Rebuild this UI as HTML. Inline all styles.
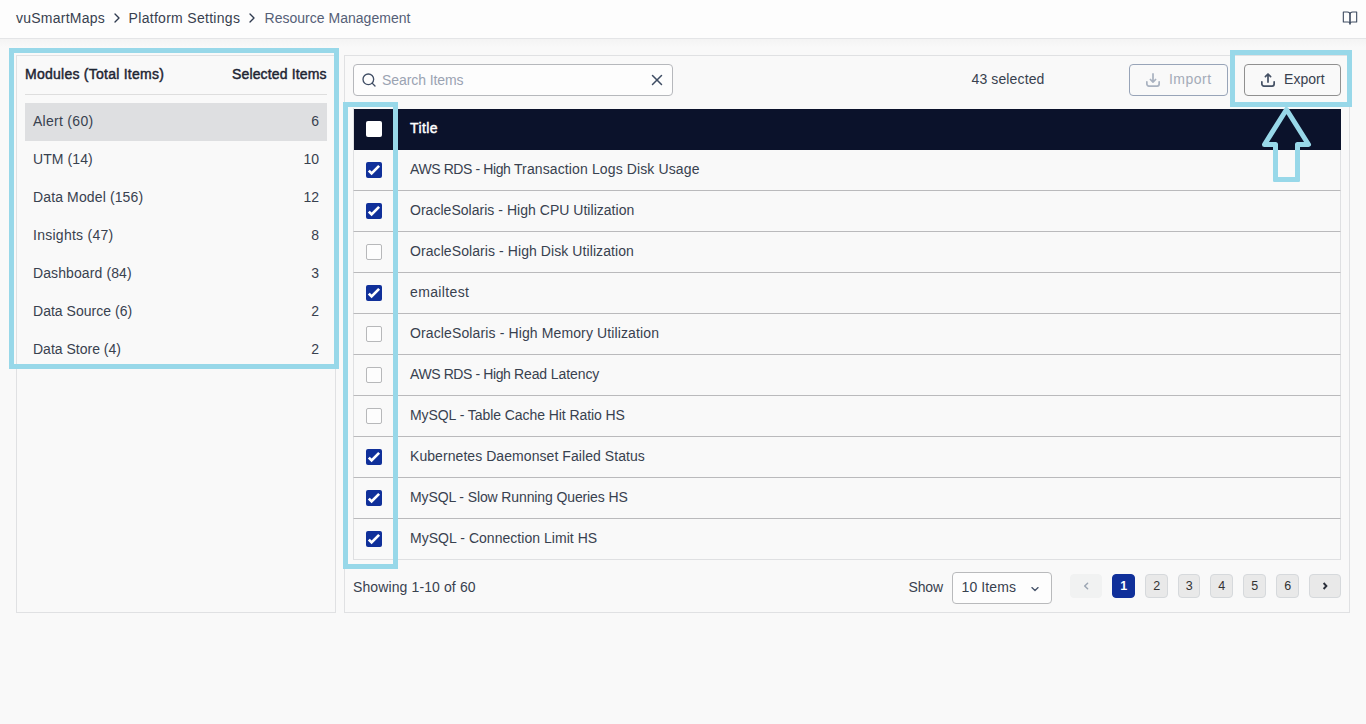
<!DOCTYPE html>
<html lang="en">
<head>
<meta charset="utf-8">
<title>Resource Management</title>
<style>
*{box-sizing:border-box;margin:0;padding:0}
html,body{width:1366px;height:724px;overflow:hidden}
body{background:#f9f9f9;font-family:"Liberation Sans",Arial,sans-serif;font-size:14px;color:#38414f;position:relative}
.abs{position:absolute}
.t{position:absolute;white-space:nowrap;line-height:20px;height:20px}
#topbar{position:absolute;left:0;top:0;width:1366px;height:39px;background:#fdfdfd;border-bottom:1px solid #e4e5e7}
#tshadow{position:absolute;left:0;top:39px;width:1366px;height:9px;background:linear-gradient(#f4f4f4,#f9f9f9)}
.panel{position:absolute;border:1px solid #e0e1e3;background:#f9f9f9}
.hl{position:absolute;border:5px solid #98d8e9;pointer-events:none}
.b{font-weight:normal;-webkit-text-stroke:0.45px currentColor}
.row-sel{position:absolute;left:25px;top:103px;width:302px;height:38px;background:#dedfe1}
.num{position:absolute;white-space:nowrap;line-height:20px;height:20px;text-align:right;width:40px;left:279px}
#search{position:absolute;left:353px;top:64px;width:320px;height:32px;border:1px solid #b6b8bc;border-radius:4px;background:#fdfdfd}
.btn{position:absolute;top:64px;height:32px;border:1px solid #909090;border-radius:4px;background:#f9f9f9}
#thead{position:absolute;left:354px;top:109px;width:987px;height:41px;background:#0b122b}
.tr{position:absolute;left:353px;width:988px;height:41px;border-left:1px solid #dfe0e2;border-right:1px solid #dfe0e2;border-bottom:1px solid #bababc}
.cb{position:absolute;left:366px;width:16px;height:16px;border-radius:2px}
.cb.off{background:#fdfdfd;border:1px solid #b7b8ba}
.cb.on{background:#10309a}
.cb svg{position:absolute;left:0;top:0}
.pg{position:absolute;top:574px;height:24px;width:23px;border:1px solid #d6d9dc;border-radius:4px;background:#e9e9e9;text-align:center;line-height:22px;font-size:12.5px;color:#333;padding-left:0.5px}
</style>
</head>
<body>
<div id="topbar"></div><div id="tshadow"></div>
<span class="t" style="left:16.0px;top:8px;letter-spacing:0.240px">vuSmartMaps</span>
<svg class="abs" style="left:108.5px;top:10px" width="16" height="16" viewBox="0 0 24 24" fill="none" stroke="#2f3b4f" stroke-width="2" stroke-linecap="round" stroke-linejoin="round"><polyline points="9 18 15 12 9 6"/></svg>
<span class="t" style="left:128.6px;top:8px;letter-spacing:0.295px">Platform Settings</span>
<svg class="abs" style="left:243.5px;top:10px" width="16" height="16" viewBox="0 0 24 24" fill="none" stroke="#2f3b4f" stroke-width="2" stroke-linecap="round" stroke-linejoin="round"><polyline points="9 18 15 12 9 6"/></svg>
<span class="t" style="left:264.5px;top:8px;letter-spacing:0.020px;color:#556077">Resource Management</span>

<svg class="abs" style="left:1342px;top:10px" width="16" height="16" viewBox="0 0 24 24" fill="none" stroke="#414e63" stroke-width="1.7" stroke-linecap="round" stroke-linejoin="round"><path d="M2 3h6a4 4 0 0 1 4 4v14a3 3 0 0 0-3-3H2z"/><path d="M22 3h-6a4 4 0 0 0-4 4v14a3 3 0 0 1 3-3h7z"/></svg>
<div class="panel" style="left:16px;top:55px;width:320px;height:558px"></div>
<div class="panel" style="left:344px;top:55px;width:1006px;height:558px"></div>

<span class="t b" style="left:25.0px;top:64px;letter-spacing:0.250px;color:#1e2533">Modules (Total Items)</span>
<span class="t b" style="left:232.0px;top:64px;letter-spacing:0.148px;color:#1e2533">Selected Items</span>
<div class="abs" style="left:25px;top:94px;width:302px;height:1px;background:#dedede"></div>
<div class="row-sel"></div>
<span class="t" style="left:33.0px;top:111px;letter-spacing:0.282px">Alert (60)</span><span class="num" style="top:111px">6</span>
<span class="t" style="left:33.0px;top:149px;letter-spacing:0.081px">UTM (14)</span><span class="num" style="top:149px">10</span>
<span class="t" style="left:33.0px;top:187px;letter-spacing:0.129px">Data Model (156)</span><span class="num" style="top:187px">12</span>
<span class="t" style="left:33.0px;top:225px;letter-spacing:0.264px">Insights (47)</span><span class="num" style="top:225px">8</span>
<span class="t" style="left:33.0px;top:263px;letter-spacing:0.100px">Dashboard (84)</span><span class="num" style="top:263px">3</span>
<span class="t" style="left:33.0px;top:301px;letter-spacing:0.026px">Data Source (6)</span><span class="num" style="top:301px">2</span>
<span class="t" style="left:33.0px;top:339px;letter-spacing:0.002px">Data Store (4)</span><span class="num" style="top:339px">2</span>

<div id="search"></div>
<svg class="abs" style="left:361px;top:72px" width="16" height="16" viewBox="0 0 24 24" fill="none" stroke="#3f4d64" stroke-width="2" stroke-linecap="round" stroke-linejoin="round"><circle cx="11" cy="11" r="8"/><line x1="21" y1="21" x2="16.65" y2="16.65"/></svg>
<svg class="abs" style="left:648px;top:71px" width="18" height="18" viewBox="0 0 24 24" fill="none" stroke="#3f4d64" stroke-width="2" stroke-linecap="round" stroke-linejoin="round"><line x1="18" y1="6" x2="6" y2="18"/><line x1="6" y1="6" x2="18" y2="18"/></svg>
<span class="t" style="left:382.0px;top:70px;letter-spacing:-0.087px;color:#9aa3b2">Search Items</span>
<span class="t" style="left:971.5px;top:69px;letter-spacing:0.125px">43 selected</span>
<div class="btn" style="left:1129px;width:99px;border-color:#98a4b8"></div>
<svg class="abs" style="left:1145px;top:72px" width="16" height="16" viewBox="0 0 16 16" fill="none" stroke="#a9b2c0" stroke-width="1.7" stroke-linecap="round" stroke-linejoin="round"><path d="M1.85 9.8V12.05A2 2 0 0 0 3.85 14.05H12.15A2 2 0 0 0 14.15 12.05V9.8"/><path d="M8 1.95V10.1M5.4 7.5L8 10.1L10.6 7.5"/></svg>
<span class="t" style="left:1169.0px;top:69px;letter-spacing:0.470px;color:#a4abb8">Import</span>
<div class="btn" style="left:1244px;width:97px"></div>
<svg class="abs" style="left:1260px;top:72px" width="16" height="16" viewBox="0 0 16 16" fill="none" stroke="#445064" stroke-width="1.7" stroke-linecap="round" stroke-linejoin="round"><path d="M1.85 9.8V12.05A2 2 0 0 0 3.85 14.05H12.15A2 2 0 0 0 14.15 12.05V9.8"/><path d="M8 2V10.1M5.4 4.6L8 2L10.6 4.6"/></svg>
<span class="t" style="left:1284.0px;top:69px;letter-spacing:0.040px">Export</span>

<div id="thead"></div>
<div class="abs" style="left:353px;top:108px;width:1px;height:42px;background:#dfe0e2"></div>
<span class="t b" style="left:410.0px;top:118px;letter-spacing:0.400px;color:#fff">Title</span>
<div class="cb" style="top:121px;background:#fff"></div>

<div class="tr" style="top:150px"></div><div class="cb on" style="top:162px"><svg width="16" height="16" viewBox="0 0 16 16"><polyline points="2.8,8.6 5.6,11.4 13.1,3.9" fill="none" stroke="#fff" stroke-width="2.7"/></svg></div><span class="t" style="left:410.0px;top:159px;letter-spacing:0.121px"><span style="letter-spacing:-0.4px">AWS RDS - High </span>Transaction Logs Disk Usage</span>
<div class="tr" style="top:191px"></div><div class="cb on" style="top:203px"><svg width="16" height="16" viewBox="0 0 16 16"><polyline points="2.8,8.6 5.6,11.4 13.1,3.9" fill="none" stroke="#fff" stroke-width="2.7"/></svg></div><span class="t" style="left:410.0px;top:200px;letter-spacing:0.028px">OracleSolaris - High CPU Utilization</span>
<div class="tr" style="top:232px"></div><div class="cb off" style="top:244px"></div><span class="t" style="left:410.0px;top:241px;letter-spacing:0.080px">OracleSolaris - High Disk Utilization</span>
<div class="tr" style="top:273px"></div><div class="cb on" style="top:285px"><svg width="16" height="16" viewBox="0 0 16 16"><polyline points="2.8,8.6 5.6,11.4 13.1,3.9" fill="none" stroke="#fff" stroke-width="2.7"/></svg></div><span class="t" style="left:410.0px;top:282px;letter-spacing:0.372px">emailtest</span>
<div class="tr" style="top:314px"></div><div class="cb off" style="top:326px"></div><span class="t" style="left:410.0px;top:323px;letter-spacing:0.123px">OracleSolaris - High Memory Utilization</span>
<div class="tr" style="top:355px"></div><div class="cb off" style="top:367px"></div><span class="t" style="left:410.0px;top:364px;letter-spacing:-0.096px"><span style="letter-spacing:-0.4px">AWS RDS - High </span>Read Latency</span>
<div class="tr" style="top:396px"></div><div class="cb off" style="top:408px"></div><span class="t" style="left:410.0px;top:405px;letter-spacing:-0.069px">MySQL - Table Cache Hit Ratio HS</span>
<div class="tr" style="top:437px"></div><div class="cb on" style="top:449px"><svg width="16" height="16" viewBox="0 0 16 16"><polyline points="2.8,8.6 5.6,11.4 13.1,3.9" fill="none" stroke="#fff" stroke-width="2.7"/></svg></div><span class="t" style="left:410.0px;top:446px;letter-spacing:0.064px">Kubernetes Daemonset Failed Status</span>
<div class="tr" style="top:478px"></div><div class="cb on" style="top:490px"><svg width="16" height="16" viewBox="0 0 16 16"><polyline points="2.8,8.6 5.6,11.4 13.1,3.9" fill="none" stroke="#fff" stroke-width="2.7"/></svg></div><span class="t" style="left:410.0px;top:487px;letter-spacing:-0.115px">MySQL - Slow Running Queries HS</span>
<div class="tr" style="top:519px;border-bottom-color:#dfe0e2"></div><div class="cb on" style="top:531px"><svg width="16" height="16" viewBox="0 0 16 16"><polyline points="2.8,8.6 5.6,11.4 13.1,3.9" fill="none" stroke="#fff" stroke-width="2.7"/></svg></div><span class="t" style="left:410.0px;top:528px;letter-spacing:0.036px">MySQL - Connection Limit HS</span>

<span class="t" style="left:353.0px;top:577px;letter-spacing:0.113px">Showing 1-10 of 60</span>
<span class="t" style="left:908.5px;top:577px;letter-spacing:-0.165px">Show</span>
<div class="abs" style="left:952px;top:572px;width:100px;height:32px;border:1px solid #b9babc;border-radius:4px;background:#fdfdfd"></div>
<span class="t" style="left:961.5px;top:577px;letter-spacing:0.115px">10 Items</span>
<svg class="abs" style="left:1029px;top:583px" width="12" height="12" viewBox="0 0 12 12" fill="none" stroke="#46536a" stroke-width="1.35" stroke-linecap="round" stroke-linejoin="round"><polyline points="2.9,4.6 6,7.6 9.1,4.6"/></svg>

<div class="pg" style="left:1070px;width:32px;background:#f1f2f2;border-color:#f1f2f2"></div>
<div class="pg" style="left:1112px;background:#10309a;border-color:#10309a;color:#fff;font-weight:bold">1</div>
<div class="pg" style="left:1145px">2</div>
<div class="pg" style="left:1178px;width:22px">3</div>
<div class="pg" style="left:1210px">4</div>
<div class="pg" style="left:1243px">5</div>
<div class="pg" style="left:1276px">6</div>
<div class="pg" style="left:1309px;width:32px"></div>

<svg class="abs" style="left:1080px;top:580px" width="12" height="12" viewBox="0 0 12 12" fill="none" stroke="#9ca6b3" stroke-width="1.5" stroke-linecap="round" stroke-linejoin="round"><polyline points="7.6,3.2 4.7,6 7.6,8.8"/></svg>
<svg class="abs" style="left:1319px;top:580px" width="12" height="12" viewBox="0 0 12 12" fill="none" stroke="#2a2f3a" stroke-width="1.9" stroke-linecap="butt" stroke-linejoin="miter"><polyline points="4.6,3 7.4,6 4.6,9"/></svg>
<div class="hl" style="left:9px;top:48px;width:330px;height:321px"></div>
<div class="hl" style="left:343px;top:102px;width:55px;height:467px"></div>
<div class="hl" style="left:1230px;top:50px;width:122px;height:57px"></div>
<svg class="abs" style="left:1255px;top:100px" width="64" height="90" viewBox="1255 100 64 90">
<path d="M1275.5 172 L1275.5 144.5 L1264.5 144.5 L1286.5 109.5 L1308.5 144.5 L1297.5 144.5 L1297.5 172" fill="none" stroke="#98d8e9" stroke-width="5" stroke-linejoin="round" stroke-linecap="butt"/>
<path fill-rule="evenodd" fill="#98d8e9" d="M1273 170 H1300 V180.8 Q1300 182 1298.8 182 H1274.2 Q1273 182 1273 180.8 Z M1278 170 V177 H1295 V170 Z"/>
</svg>
</body>
</html>
